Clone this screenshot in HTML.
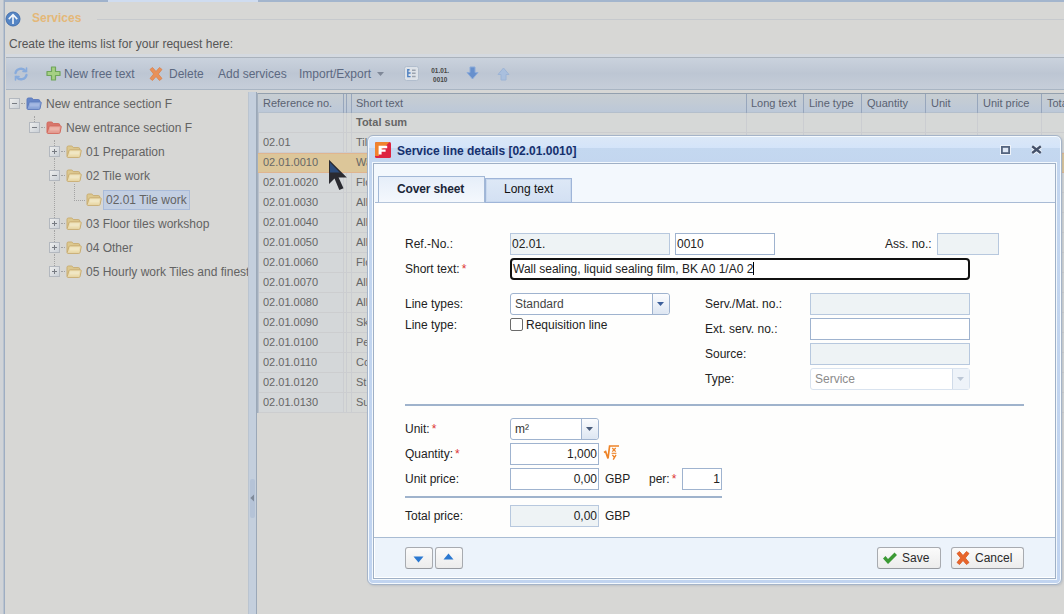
<!DOCTYPE html>
<html><head><meta charset="utf-8">
<style>
*{box-sizing:border-box;margin:0;padding:0}
html,body{width:1064px;height:614px;overflow:hidden;background:#d7d7d5;font-family:"Liberation Sans",sans-serif;font-size:12px;color:#4a4a4a}
.a{position:absolute}
.t{position:absolute;white-space:nowrap;line-height:14px}
/* background app */
#topbar{left:0;top:0;width:1064px;height:2px;background:linear-gradient(90deg,#9fb2cc 0,#9fb2cc 108px,#cfdcf0 108px,#cfdcf0 258px,#a3b5cd 258px)}
#leftedge{left:0;top:0;width:5px;height:614px;background:#d0d3d7;border-right:1px solid #9eadc2;box-shadow:-1px 0 0 #b9c3cf inset}
#toolbar{left:6px;top:57px;width:1058px;height:33px;background:linear-gradient(#cad2dd,#bdc6d3 50%,#c6ced9);border-top:1px solid #aab2bc;border-bottom:1px solid #a9b5c3;box-shadow:0 -3px 0 #d4d9e0}
#tree{left:6px;top:92px;width:242px;height:522px;background:#d7d7d5;overflow:hidden}
#split{left:248px;top:92px;width:9px;height:522px;background:#c4cfdd;border-left:1px solid #bac4d0;border-right:1px solid #9ba8b8}
#gridhdr{left:258px;top:93px;width:806px;height:20px;background:linear-gradient(#c8ced2,#bcc8d8);border-top:1px solid #93a0ae;border-bottom:1px solid #b4bfcc}
.row{position:absolute;left:258px;width:110px;height:20px;border-bottom:1px solid #cbcbcb;background:#d6d8d9}
.gt{color:#555}
/* dialog */
#dlg{left:367px;top:135px;width:695px;height:450px;background:linear-gradient(#dbe8f7 0,#d4e4f9 12px,#c4d8f0 12px,#c3d6ef 27px,#c1d4f0 100%);border:1px solid #a5b4c8;border-radius:6px;box-shadow:inset 0 0 0 1px #f5fafe,1px 1px 2px rgba(120,130,150,.25)}
#dlgbody{left:373px;top:163px;width:683px;height:416px;background:#fefefd;border:1px solid #9fb0c6;box-shadow:0 0 0 1px #f2f8fd}
#tabstrip{left:374px;top:164px;width:681px;height:38px;background:#f3f8fd}
#foot{left:374px;top:537px;width:681px;height:41px;background:#ecf3fb;border-top:1px solid #a9bcd3;box-shadow:inset 1px -1px 0 #fff}
.inp{position:absolute;height:22px;border:1px solid #9fb3cf;background:#fff;color:#222;font-size:12px;line-height:20px;padding-left:1px;white-space:nowrap;overflow:hidden}
.ro{background:#eef3f5;border-color:#b7c8de}
.lbl{position:absolute;white-space:nowrap;color:#222;line-height:14px;font-size:12px}
.req{color:#d33}
.btn{position:absolute;height:22px;border:1px solid #a8abb0;border-bottom-color:#979aa0;border-radius:3px;background:linear-gradient(#fbfbfb,#ececec);color:#2a2a2a;line-height:20px;font-size:12px}
</style></head><body>
<div class="a" id="topbar"></div>
<div class="a" id="leftedge"></div>
<!-- header -->
<svg class="a" style="left:5px;top:11px" width="16" height="16" viewBox="0 0 16 16"><circle cx="8" cy="8" r="7" fill="#5585c4" stroke="#436fae" stroke-width="1"/><path d="M8 2.6 L3.2 7.6 L4.3 8.7 L7.2 5.8 V13 H8.8 V5.8 L11.7 8.7 L12.8 7.6 Z" fill="#f4f7fb"/></svg>
<div class="t" style="left:32px;top:11px;font-weight:bold;color:#e4b878;font-size:12px">Services</div>
<div class="a" style="left:97px;top:19px;width:967px;height:1px;background:#c6c9cd"></div>
<div class="t" style="left:9px;top:37px;color:#555">Create the items list for your request here:</div>
<div class="a" id="toolbar"></div>
<div class="t" style="left:64px;top:67px;color:#5c6981">New free text</div>
<div class="t" style="left:169px;top:67px;color:#5c6981">Delete</div>
<div class="t" style="left:218px;top:67px;color:#5c6981">Add services</div>
<div class="t" style="left:299px;top:67px;color:#5c6981">Import/Export</div>

<!-- toolbar icons -->
<svg class="a" style="left:13px;top:66px" width="16" height="16" viewBox="0 0 16 16" fill="none" stroke="#88abdc" stroke-width="2.3" stroke-linecap="round"><path d="M2.5 7 A5.5 5 0 0 1 12.5 5"/><path d="M13.5 9 A5.5 5 0 0 1 3.5 11"/><path d="M13.5 2 V5.5 H10" stroke-width="1.6"/><path d="M2.5 14 V10.5 H6" stroke-width="1.6"/></svg>
<svg class="a" style="left:46px;top:66px" width="15" height="15" viewBox="0 0 15 15"><path d="M5.5 1 H9.5 V5.5 H14 V9.5 H9.5 V14 H5.5 V9.5 H1 V5.5 H5.5 Z" fill="#a5d083" stroke="#6fa55a" stroke-width="1.2" stroke-linejoin="round"/></svg>
<svg class="a" style="left:148px;top:66px" width="16" height="16" viewBox="0 0 16 16"><path d="M2 3.5 L4.5 1.5 L8 5.5 L11.5 1.5 L14 3.5 L10.3 8 L14 12.5 L11.5 14.5 L8 10.5 L4.5 14.5 L2 12.5 L5.7 8 Z" fill="#e8915a" stroke="#d9824c" stroke-width=".8" stroke-linejoin="round"/></svg>
<svg class="a" style="left:376px;top:71px" width="9" height="6" viewBox="0 0 9 6"><path d="M1 1 H8 L4.5 5 Z" fill="#7f8898"/></svg>
<svg class="a" style="left:404px;top:66px" width="15" height="15" viewBox="0 0 15 15"><rect x=".5" y=".5" width="14" height="14" rx="2" fill="#dde2e8" stroke="#b1bdcd"/><path d="M3.2 3.8 H5.6 M3.8 3 V10.6 H6.6 M3.8 7 H6.6" stroke="#4f80c0" stroke-width="1.4" fill="none"/><path d="M8 4.2 H11.6 M8 7.2 H11.6 M8 10.4 H11.6" stroke="#9aa2ad" stroke-width="1.5" fill="none"/></svg>
<div class="t" style="left:431px;top:67px;font-size:8px;line-height:8.5px;font-weight:bold;color:#454545;text-align:center;width:23px;transform:scaleX(.8);transform-origin:0 0">01.01.<br>0010</div>
<svg class="a" style="left:466px;top:66px" width="13" height="14" viewBox="0 0 13 14"><path d="M4 1 H9 V6.5 H12 L6.5 13 L1 6.5 H4 Z" fill="#6790cd" stroke="#8cabd9" stroke-width="1" stroke-linejoin="round"/></svg>
<svg class="a" style="left:497px;top:67px" width="13" height="14" viewBox="0 0 13 14"><path d="M4 13 H9 V7.5 H12 L6.5 1 L1 7.5 H4 Z" fill="#a9bfde" stroke="#9cb4d6" stroke-width="1" stroke-linejoin="round"/></svg>
<div class="a" id="tree"></div>
<!-- tree -->
<div class="a" style="left:34px;top:116px;width:0;height:6px;border-left:1px dotted #a3a3a3"></div>
<div class="a" style="left:54px;top:140px;width:0;height:6px;border-left:1px dotted #a3a3a3"></div>
<div class="a" style="left:54px;top:158px;width:0;height:12px;border-left:1px dotted #a3a3a3"></div>
<div class="a" style="left:54px;top:182px;width:0;height:36px;border-left:1px dotted #a3a3a3"></div>
<div class="a" style="left:54px;top:230px;width:0;height:12px;border-left:1px dotted #a3a3a3"></div>
<div class="a" style="left:54px;top:254px;width:0;height:12px;border-left:1px dotted #a3a3a3"></div>
<div class="a" style="left:74px;top:184px;width:0;height:17px;border-left:1px dotted #a3a3a3"></div>
<div class="a" style="left:74px;top:200px;width:11px;height:0;border-top:1px dotted #a3a3a3"></div>
<div class="a" style="left:103px;top:190px;width:87px;height:20px;background:#c3cfe2;border:1px solid #a9bbd9"></div>
<svg class="a" style="left:9px;top:98px" width="11" height="11" viewBox="0 0 11 11"><defs><linearGradient id="bg998" x1="0" y1="0" x2="1" y2="1"><stop offset="0" stop-color="#efefee"/><stop offset="1" stop-color="#c9cfd6"/></linearGradient></defs><rect x=".5" y=".5" width="10" height="10" fill="url(#bg998)" stroke="#b3b8bf"/><path d="M3 5.5 H8" stroke="#777b82" stroke-width="1"/></svg>
<div class="a" style="left:21px;top:103px;width:4px;height:0;border-top:1px dotted #a3a3a3"></div>
<svg class="a" style="left:26px;top:97px" width="16" height="13" viewBox="0 0 16 13"><path d="M1 11.5 V2.4 Q1 1 2.4 1 H5.4 Q6.3 1 6.8 1.8 L7.3 2.6 H12.4 Q13.7 2.6 13.7 3.9 V6" fill="#6786c7" stroke="#5f7cbd" stroke-width="1"/><path d="M1.2 11.6 Q1 12.4 2 12.4 H12.8 Q13.9 12.4 14.1 11.4 L15.2 5.9 Q15.4 4.8 14.3 4.8 H4.2 Q3.1 4.8 2.9 5.8 Z" fill="#8fa8da" stroke="#5f7cbd" stroke-width="1" stroke-linejoin="round"/><path d="M4.2 6.3 H13.6 L12.9 9.5 H3.5 Z" fill="#a9bce3" opacity=".8"/></svg>
<div class="t" style="left:46px;top:97px;color:#636363">New entrance section F</div>
<svg class="a" style="left:29px;top:122px" width="11" height="11" viewBox="0 0 11 11"><defs><linearGradient id="bg29122" x1="0" y1="0" x2="1" y2="1"><stop offset="0" stop-color="#efefee"/><stop offset="1" stop-color="#c9cfd6"/></linearGradient></defs><rect x=".5" y=".5" width="10" height="10" fill="url(#bg29122)" stroke="#b3b8bf"/><path d="M3 5.5 H8" stroke="#777b82" stroke-width="1"/></svg>
<div class="a" style="left:41px;top:127px;width:4px;height:0;border-top:1px dotted #a3a3a3"></div>
<svg class="a" style="left:46px;top:121px" width="16" height="13" viewBox="0 0 16 13"><path d="M1 11.5 V2.4 Q1 1 2.4 1 H5.4 Q6.3 1 6.8 1.8 L7.3 2.6 H12.4 Q13.7 2.6 13.7 3.9 V6" fill="#d8786d" stroke="#d36a5e" stroke-width="1"/><path d="M1.2 11.6 Q1 12.4 2 12.4 H12.8 Q13.9 12.4 14.1 11.4 L15.2 5.9 Q15.4 4.8 14.3 4.8 H4.2 Q3.1 4.8 2.9 5.8 Z" fill="#e5a196" stroke="#d36a5e" stroke-width="1" stroke-linejoin="round"/><path d="M4.2 6.3 H13.6 L12.9 9.5 H3.5 Z" fill="#edb9ae" opacity=".8"/></svg>
<div class="t" style="left:66px;top:121px;color:#636363">New entrance section F</div>
<svg class="a" style="left:49px;top:146px" width="11" height="11" viewBox="0 0 11 11"><defs><linearGradient id="bg49146" x1="0" y1="0" x2="1" y2="1"><stop offset="0" stop-color="#efefee"/><stop offset="1" stop-color="#c9cfd6"/></linearGradient></defs><rect x=".5" y=".5" width="10" height="10" fill="url(#bg49146)" stroke="#b3b8bf"/><path d="M3 5.5 H8" stroke="#777b82" stroke-width="1"/><path d="M5.5 3 V8" stroke="#777b82" stroke-width="1"/></svg>
<div class="a" style="left:61px;top:151px;width:4px;height:0;border-top:1px dotted #a3a3a3"></div>
<svg class="a" style="left:66px;top:145px" width="16" height="13" viewBox="0 0 16 13"><path d="M1 11.5 V2.4 Q1 1 2.4 1 H5.4 Q6.3 1 6.8 1.8 L7.3 2.6 H12.4 Q13.7 2.6 13.7 3.9 V6" fill="#dcc88f" stroke="#c9ad72" stroke-width="1"/><path d="M1.2 11.6 Q1 12.4 2 12.4 H12.8 Q13.9 12.4 14.1 11.4 L15.2 5.9 Q15.4 4.8 14.3 4.8 H4.2 Q3.1 4.8 2.9 5.8 Z" fill="#ebdcae" stroke="#c9ad72" stroke-width="1" stroke-linejoin="round"/><path d="M4.2 6.3 H13.6 L12.9 9.5 H3.5 Z" fill="#f1e8c8" opacity=".8"/></svg>
<div class="t" style="left:86px;top:145px;color:#636363">01 Preparation</div>
<svg class="a" style="left:49px;top:170px" width="11" height="11" viewBox="0 0 11 11"><defs><linearGradient id="bg49170" x1="0" y1="0" x2="1" y2="1"><stop offset="0" stop-color="#efefee"/><stop offset="1" stop-color="#c9cfd6"/></linearGradient></defs><rect x=".5" y=".5" width="10" height="10" fill="url(#bg49170)" stroke="#b3b8bf"/><path d="M3 5.5 H8" stroke="#777b82" stroke-width="1"/></svg>
<div class="a" style="left:61px;top:175px;width:4px;height:0;border-top:1px dotted #a3a3a3"></div>
<svg class="a" style="left:66px;top:169px" width="16" height="13" viewBox="0 0 16 13"><path d="M1 11.5 V2.4 Q1 1 2.4 1 H5.4 Q6.3 1 6.8 1.8 L7.3 2.6 H12.4 Q13.7 2.6 13.7 3.9 V6" fill="#dcc88f" stroke="#c9ad72" stroke-width="1"/><path d="M1.2 11.6 Q1 12.4 2 12.4 H12.8 Q13.9 12.4 14.1 11.4 L15.2 5.9 Q15.4 4.8 14.3 4.8 H4.2 Q3.1 4.8 2.9 5.8 Z" fill="#ebdcae" stroke="#c9ad72" stroke-width="1" stroke-linejoin="round"/><path d="M4.2 6.3 H13.6 L12.9 9.5 H3.5 Z" fill="#f1e8c8" opacity=".8"/></svg>
<div class="t" style="left:86px;top:169px;color:#636363">02 Tile work</div>
<svg class="a" style="left:86px;top:193px" width="16" height="13" viewBox="0 0 16 13"><path d="M1 11.5 V2.4 Q1 1 2.4 1 H5.4 Q6.3 1 6.8 1.8 L7.3 2.6 H12.4 Q13.7 2.6 13.7 3.9 V6" fill="#dcc88f" stroke="#c9ad72" stroke-width="1"/><path d="M1.2 11.6 Q1 12.4 2 12.4 H12.8 Q13.9 12.4 14.1 11.4 L15.2 5.9 Q15.4 4.8 14.3 4.8 H4.2 Q3.1 4.8 2.9 5.8 Z" fill="#ebdcae" stroke="#c9ad72" stroke-width="1" stroke-linejoin="round"/><path d="M4.2 6.3 H13.6 L12.9 9.5 H3.5 Z" fill="#f1e8c8" opacity=".8"/></svg>
<div class="t" style="left:106px;top:193px;color:#636363">02.01 Tile work</div>
<svg class="a" style="left:49px;top:218px" width="11" height="11" viewBox="0 0 11 11"><defs><linearGradient id="bg49218" x1="0" y1="0" x2="1" y2="1"><stop offset="0" stop-color="#efefee"/><stop offset="1" stop-color="#c9cfd6"/></linearGradient></defs><rect x=".5" y=".5" width="10" height="10" fill="url(#bg49218)" stroke="#b3b8bf"/><path d="M3 5.5 H8" stroke="#777b82" stroke-width="1"/><path d="M5.5 3 V8" stroke="#777b82" stroke-width="1"/></svg>
<div class="a" style="left:61px;top:223px;width:4px;height:0;border-top:1px dotted #a3a3a3"></div>
<svg class="a" style="left:66px;top:217px" width="16" height="13" viewBox="0 0 16 13"><path d="M1 11.5 V2.4 Q1 1 2.4 1 H5.4 Q6.3 1 6.8 1.8 L7.3 2.6 H12.4 Q13.7 2.6 13.7 3.9 V6" fill="#dcc88f" stroke="#c9ad72" stroke-width="1"/><path d="M1.2 11.6 Q1 12.4 2 12.4 H12.8 Q13.9 12.4 14.1 11.4 L15.2 5.9 Q15.4 4.8 14.3 4.8 H4.2 Q3.1 4.8 2.9 5.8 Z" fill="#ebdcae" stroke="#c9ad72" stroke-width="1" stroke-linejoin="round"/><path d="M4.2 6.3 H13.6 L12.9 9.5 H3.5 Z" fill="#f1e8c8" opacity=".8"/></svg>
<div class="t" style="left:86px;top:217px;color:#636363">03 Floor tiles workshop</div>
<svg class="a" style="left:49px;top:242px" width="11" height="11" viewBox="0 0 11 11"><defs><linearGradient id="bg49242" x1="0" y1="0" x2="1" y2="1"><stop offset="0" stop-color="#efefee"/><stop offset="1" stop-color="#c9cfd6"/></linearGradient></defs><rect x=".5" y=".5" width="10" height="10" fill="url(#bg49242)" stroke="#b3b8bf"/><path d="M3 5.5 H8" stroke="#777b82" stroke-width="1"/><path d="M5.5 3 V8" stroke="#777b82" stroke-width="1"/></svg>
<div class="a" style="left:61px;top:247px;width:4px;height:0;border-top:1px dotted #a3a3a3"></div>
<svg class="a" style="left:66px;top:241px" width="16" height="13" viewBox="0 0 16 13"><path d="M1 11.5 V2.4 Q1 1 2.4 1 H5.4 Q6.3 1 6.8 1.8 L7.3 2.6 H12.4 Q13.7 2.6 13.7 3.9 V6" fill="#dcc88f" stroke="#c9ad72" stroke-width="1"/><path d="M1.2 11.6 Q1 12.4 2 12.4 H12.8 Q13.9 12.4 14.1 11.4 L15.2 5.9 Q15.4 4.8 14.3 4.8 H4.2 Q3.1 4.8 2.9 5.8 Z" fill="#ebdcae" stroke="#c9ad72" stroke-width="1" stroke-linejoin="round"/><path d="M4.2 6.3 H13.6 L12.9 9.5 H3.5 Z" fill="#f1e8c8" opacity=".8"/></svg>
<div class="t" style="left:86px;top:241px;color:#636363">04 Other</div>
<svg class="a" style="left:49px;top:266px" width="11" height="11" viewBox="0 0 11 11"><defs><linearGradient id="bg49266" x1="0" y1="0" x2="1" y2="1"><stop offset="0" stop-color="#efefee"/><stop offset="1" stop-color="#c9cfd6"/></linearGradient></defs><rect x=".5" y=".5" width="10" height="10" fill="url(#bg49266)" stroke="#b3b8bf"/><path d="M3 5.5 H8" stroke="#777b82" stroke-width="1"/><path d="M5.5 3 V8" stroke="#777b82" stroke-width="1"/></svg>
<div class="a" style="left:61px;top:271px;width:4px;height:0;border-top:1px dotted #a3a3a3"></div>
<svg class="a" style="left:66px;top:265px" width="16" height="13" viewBox="0 0 16 13"><path d="M1 11.5 V2.4 Q1 1 2.4 1 H5.4 Q6.3 1 6.8 1.8 L7.3 2.6 H12.4 Q13.7 2.6 13.7 3.9 V6" fill="#dcc88f" stroke="#c9ad72" stroke-width="1"/><path d="M1.2 11.6 Q1 12.4 2 12.4 H12.8 Q13.9 12.4 14.1 11.4 L15.2 5.9 Q15.4 4.8 14.3 4.8 H4.2 Q3.1 4.8 2.9 5.8 Z" fill="#ebdcae" stroke="#c9ad72" stroke-width="1" stroke-linejoin="round"/><path d="M4.2 6.3 H13.6 L12.9 9.5 H3.5 Z" fill="#f1e8c8" opacity=".8"/></svg>
<div class="t" style="left:86px;top:265px;color:#636363;width:162px;overflow:hidden">05 Hourly work Tiles and finest</div>
<!-- /tree -->
<div class="a" id="split"></div>
<div class="a" style="left:250px;top:479px;width:5px;height:39px;background:#b5c3d7;border-radius:2px"></div>
<svg class="a" style="left:250px;top:494px" width="5" height="8" viewBox="0 0 5 8"><path d="M4 .5 V7.5 L.3 4 Z" fill="#7f8a99"/></svg>
<div class="a" id="gridhdr"></div>
<!-- grid -->
<div class="t" style="font-size:11px;left:263px;top:96px;color:#5a6272">Reference no.</div>
<div class="t" style="font-size:11px;left:356px;top:96px;color:#5a6272">Short text</div>
<div class="t" style="font-size:11px;left:751px;top:96px;color:#5a6272">Long text</div>
<div class="t" style="font-size:11px;left:809px;top:96px;color:#5a6272">Line type</div>
<div class="t" style="font-size:11px;left:867px;top:96px;color:#5a6272">Quantity</div>
<div class="t" style="font-size:11px;left:931px;top:96px;color:#5a6272">Unit</div>
<div class="t" style="font-size:11px;left:983px;top:96px;color:#5a6272">Unit price</div>
<div class="t" style="font-size:11px;left:1047px;top:96px;color:#5a6272">Total</div>
<div class="a" style="left:257px;top:93px;width:1px;height:320px;background:#a3afbd"></div>
<div class="a" style="left:343px;top:94px;width:1px;height:19px;background:#97a6bc"></div>
<div class="a" style="left:346px;top:94px;width:1px;height:19px;background:#97a6bc"></div>
<div class="a" style="left:351px;top:94px;width:1px;height:19px;background:#97a6bc"></div>
<div class="a" style="left:746px;top:94px;width:1px;height:19px;background:#97a6bc"></div>
<div class="a" style="left:803px;top:94px;width:1px;height:19px;background:#97a6bc"></div>
<div class="a" style="left:861px;top:94px;width:1px;height:19px;background:#97a6bc"></div>
<div class="a" style="left:925px;top:94px;width:1px;height:19px;background:#97a6bc"></div>
<div class="a" style="left:977px;top:94px;width:1px;height:19px;background:#97a6bc"></div>
<div class="a" style="left:1041px;top:94px;width:1px;height:19px;background:#97a6bc"></div>
<div class="a" style="left:258px;top:113px;width:806px;height:300px;background:#d6d8d7"></div>
<div class="a" style="left:258px;top:113px;width:85px;height:300px;background:#d4d7d9"></div>
<div class="a" style="left:258px;top:132px;width:806px;height:1px;background:#cccdcf"></div>
<div class="t" style="font-size:11px;left:263px;top:115px;color:#666"></div>
<div class="t" style="font-size:11px;left:356px;top:115px;color:#666;font-weight:bold;">Total sum</div>
<div class="a" style="left:258px;top:152px;width:806px;height:1px;background:#cccdcf"></div>
<div class="t" style="font-size:11px;left:263px;top:135px;color:#666">02.01</div>
<div class="t" style="font-size:11px;left:356px;top:135px;color:#666;">Til</div>
<div class="a" style="left:258px;top:192px;width:806px;height:1px;background:#cccdcf"></div>
<div class="t" style="font-size:11px;left:263px;top:175px;color:#666">02.01.0020</div>
<div class="t" style="font-size:11px;left:356px;top:175px;color:#666;">Flo</div>
<div class="a" style="left:258px;top:212px;width:806px;height:1px;background:#cccdcf"></div>
<div class="t" style="font-size:11px;left:263px;top:195px;color:#666">02.01.0030</div>
<div class="t" style="font-size:11px;left:356px;top:195px;color:#666;">All</div>
<div class="a" style="left:258px;top:232px;width:806px;height:1px;background:#cccdcf"></div>
<div class="t" style="font-size:11px;left:263px;top:215px;color:#666">02.01.0040</div>
<div class="t" style="font-size:11px;left:356px;top:215px;color:#666;">All</div>
<div class="a" style="left:258px;top:252px;width:806px;height:1px;background:#cccdcf"></div>
<div class="t" style="font-size:11px;left:263px;top:235px;color:#666">02.01.0050</div>
<div class="t" style="font-size:11px;left:356px;top:235px;color:#666;">All</div>
<div class="a" style="left:258px;top:272px;width:806px;height:1px;background:#cccdcf"></div>
<div class="t" style="font-size:11px;left:263px;top:255px;color:#666">02.01.0060</div>
<div class="t" style="font-size:11px;left:356px;top:255px;color:#666;">Flo</div>
<div class="a" style="left:258px;top:292px;width:806px;height:1px;background:#cccdcf"></div>
<div class="t" style="font-size:11px;left:263px;top:275px;color:#666">02.01.0070</div>
<div class="t" style="font-size:11px;left:356px;top:275px;color:#666;">All</div>
<div class="a" style="left:258px;top:312px;width:806px;height:1px;background:#cccdcf"></div>
<div class="t" style="font-size:11px;left:263px;top:295px;color:#666">02.01.0080</div>
<div class="t" style="font-size:11px;left:356px;top:295px;color:#666;">All</div>
<div class="a" style="left:258px;top:332px;width:806px;height:1px;background:#cccdcf"></div>
<div class="t" style="font-size:11px;left:263px;top:315px;color:#666">02.01.0090</div>
<div class="t" style="font-size:11px;left:356px;top:315px;color:#666;">Sk</div>
<div class="a" style="left:258px;top:352px;width:806px;height:1px;background:#cccdcf"></div>
<div class="t" style="font-size:11px;left:263px;top:335px;color:#666">02.01.0100</div>
<div class="t" style="font-size:11px;left:356px;top:335px;color:#666;">Pe</div>
<div class="a" style="left:258px;top:372px;width:806px;height:1px;background:#cccdcf"></div>
<div class="t" style="font-size:11px;left:263px;top:355px;color:#666">02.01.0110</div>
<div class="t" style="font-size:11px;left:356px;top:355px;color:#666;">Co</div>
<div class="a" style="left:258px;top:392px;width:806px;height:1px;background:#cccdcf"></div>
<div class="t" style="font-size:11px;left:263px;top:375px;color:#666">02.01.0120</div>
<div class="t" style="font-size:11px;left:356px;top:375px;color:#666;">St</div>
<div class="a" style="left:258px;top:412px;width:806px;height:1px;background:#cccdcf"></div>
<div class="t" style="font-size:11px;left:263px;top:395px;color:#666">02.01.0130</div>
<div class="t" style="font-size:11px;left:356px;top:395px;color:#666;">Su</div>
<div class="a" style="left:343px;top:113px;width:1px;height:300px;background:#cbcdd1"></div>
<div class="a" style="left:346px;top:113px;width:1px;height:300px;background:#cbcdd1"></div>
<div class="a" style="left:351px;top:113px;width:1px;height:300px;background:#cbcdd1"></div>
<div class="a" style="left:746px;top:113px;width:1px;height:300px;background:#cbcdd1"></div>
<div class="a" style="left:803px;top:113px;width:1px;height:300px;background:#cbcdd1"></div>
<div class="a" style="left:861px;top:113px;width:1px;height:300px;background:#cbcdd1"></div>
<div class="a" style="left:925px;top:113px;width:1px;height:300px;background:#cbcdd1"></div>
<div class="a" style="left:977px;top:113px;width:1px;height:300px;background:#cbcdd1"></div>
<div class="a" style="left:1041px;top:113px;width:1px;height:300px;background:#cbcdd1"></div>
<div class="a" style="left:258px;top:113px;width:1px;height:300px;background:#b9c1cd"></div>
<div class="a" style="left:258px;top:153px;width:806px;height:20px;background:#dcc699;border-top:1px solid #e0b58f;border-bottom:1px solid #e0b58f"></div>
<div class="t" style="font-size:11px;left:263px;top:155px;color:#666">02.01.0010</div>
<div class="t" style="font-size:11px;left:356px;top:155px;color:#666;">Wa</div>
<svg class="a" style="left:327px;top:158px" width="22" height="34" viewBox="0 0 22 34"><defs><clipPath id="cc"><rect x="0" y="0" width="22" height="14.5"/></clipPath></defs><path d="M2 1.8 V26 L7.5 20.5 L12.3 32 L16.5 30.2 L11.6 19.4 H19.8 Z" fill="#2a2a30"/><path d="M3 4.5 V24 L7.8 19 L9 19.4 H17.5 Z" fill="#2c4c7c" clip-path="url(#cc)"/></svg>
<!-- /grid -->
<!-- dialog -->
<div class="a" id="dlg"></div>
<div class="a" id="dlgbody"></div>
<div class="a" id="tabstrip"></div>
<div class="a" id="foot"></div>
<div class="t" style="left:397px;top:144px;font-weight:bold;color:#15306e;font-size:12px">Service line details [02.01.0010]</div>

<!-- dlg content -->
<svg class="a" style="left:375px;top:142px" width="16" height="16" viewBox="0 0 16 16"><rect x="0" y="0" width="16" height="16" rx="1.5" fill="#de2440"/><path d="M0 14 V1.5 Q0 0 1.5 0 H14.5 L4 10.5 V14 Z" fill="#f0832e"/><path d="M3.6 12.6 V3.8 H12.2 V6.2 H6.6 V7.6 H10.6 V9.8 H6.6 V12.6 Z" fill="#fff"/></svg>
<svg class="a" style="left:999px;top:144px" width="13" height="12" viewBox="0 0 13 12"><rect x="1" y="1" width="11" height="10" fill="#eef3fa"/><rect x="2.9" y="2.9" width="7.2" height="6.2" fill="#dfe8f5" stroke="#55657f" stroke-width="1.8"/></svg>
<svg class="a" style="left:1030px;top:144px" width="13" height="11" viewBox="0 0 13 11"><path d="M2.2 2.3 L10.8 9 M10.8 2.3 L2.2 9" stroke="#f1f6fc" stroke-width="4.2"/><path d="M2.2 2.3 L10.8 9 M10.8 2.3 L2.2 9" stroke="#45526b" stroke-width="2.4"/></svg>
<!-- tabs -->
<div class="a" style="left:375px;top:202px;width:680px;height:1px;background:#a9bbd5"></div>
<div class="a" style="left:378px;top:176px;width:107px;height:27px;background:linear-gradient(#e6eef9,#f4f8fd);border:1px solid #a2b8d6;border-bottom-color:#b5c5da"></div>
<div class="a" style="left:485px;top:178px;width:87px;height:25px;background:linear-gradient(#dde8f6,#d3e0f3);border:1px solid #9fb5d8;box-shadow:inset 0 0 0 1px #c9d9ee"></div>
<div class="lbl" style="left:397px;top:182px;color:#1b2638;font-weight:bold;letter-spacing:-.15px">Cover sheet</div>
<div class="lbl" style="left:504px;top:182px;color:#111">Long text</div>
<!-- fields -->
<div class="lbl" style="left:405px;top:237px">Ref.-No.:</div>
<div class="inp ro" style="left:510px;top:233px;width:160px">02.01.</div>
<div class="inp" style="left:675px;top:233px;width:100px">0010</div>
<div class="lbl" style="left:885px;top:237px">Ass. no.:</div>
<div class="inp ro" style="left:937px;top:233px;width:62px"></div>
<div class="lbl" style="left:405px;top:262px">Short text:<span class="req" style="margin-left:2px">*</span></div>
<div class="inp" style="left:510px;top:258px;width:460px;border:2px solid #111;border-radius:4px;line-height:18px;padding-left:1px">Wall sealing, liquid sealing film, BK A0 1/A0 2<span style="display:inline-block;width:1px;height:13px;background:#000;vertical-align:-2px"></span></div>
<div class="lbl" style="left:405px;top:297px">Line types:</div>
<div class="inp" style="left:510px;top:293px;width:160px;color:#444;padding-left:4px;border-radius:3px">Standard</div>
<div class="a" style="left:652px;top:294px;width:17px;height:20px;background:linear-gradient(#fbfcfe,#dde6f2);border-left:1px solid #9fb3cf;border-radius:0 3px 3px 0"></div>
<svg class="a" style="left:656px;top:301px" width="9" height="6" viewBox="0 0 9 6"><path d="M1 1 H8 L4.5 5 Z" fill="#3c5f9b"/></svg>
<div class="lbl" style="left:405px;top:318px">Line type:</div>
<div class="a" style="left:510px;top:318px;width:13px;height:13px;border:1px solid #6b6b6b;border-radius:2px;background:#fff"></div>
<div class="lbl" style="left:526px;top:318px">Requisition line</div>
<div class="lbl" style="left:705px;top:297px">Serv./Mat. no.:</div>
<div class="inp ro" style="left:810px;top:293px;width:160px"></div>
<div class="lbl" style="left:705px;top:322px">Ext. serv. no.:</div>
<div class="inp" style="left:810px;top:318px;width:160px"></div>
<div class="lbl" style="left:705px;top:347px">Source:</div>
<div class="inp ro" style="left:810px;top:343px;width:160px"></div>
<div class="lbl" style="left:705px;top:372px">Type:</div>
<div class="inp" style="left:810px;top:368px;width:160px;color:#8c8c8c;border-color:#d9e3ef;padding-left:4px;border-radius:3px">Service</div>
<div class="a" style="left:952px;top:369px;width:17px;height:20px;background:#eef3f9;border-left:1px solid #d0dbe9"></div>
<svg class="a" style="left:956px;top:376px" width="9" height="6" viewBox="0 0 9 6"><path d="M1 1 H8 L4.5 5 Z" fill="#bcc7d6"/></svg>
<div class="a" style="left:405px;top:404px;width:619px;height:2px;background:#9fb3cc"></div>
<div class="lbl" style="left:405px;top:422px">Unit:<span class="req" style="margin-left:2px">*</span></div>
<div class="inp" style="left:510px;top:418px;width:89px;color:#333;padding-left:4px;border-radius:3px">m²</div>
<div class="a" style="left:581px;top:419px;width:17px;height:20px;background:linear-gradient(#fbfcfe,#dde6f2);border-left:1px solid #9fb3cf;border-radius:0 3px 3px 0"></div>
<svg class="a" style="left:585px;top:426px" width="9" height="6" viewBox="0 0 9 6"><path d="M1 1 H8 L4.5 5 Z" fill="#4a5d7c"/></svg>
<div class="lbl" style="left:405px;top:447px">Quantity:<span class="req" style="margin-left:2px">*</span></div>
<div class="inp" style="left:510px;top:443px;width:89px;text-align:right;padding-right:1px">1,000</div>
<div class="lbl" style="left:405px;top:472px">Unit price:</div>
<div class="inp" style="left:510px;top:468px;width:89px;text-align:right;padding-right:1px">0,00</div>
<div class="lbl" style="left:605px;top:472px">GBP</div>
<div class="lbl" style="left:649px;top:472px">per:<span class="req" style="margin-left:2px">*</span></div>
<div class="inp" style="left:682px;top:468px;width:40px;text-align:right;padding-right:1px">1</div>
<div class="a" style="left:405px;top:496px;width:317px;height:2px;background:#9fb3cc"></div>
<div class="lbl" style="left:405px;top:509px">Total price:</div>
<div class="inp ro" style="left:510px;top:505px;width:89px;text-align:right;padding-right:1px">0,00</div>
<div class="lbl" style="left:605px;top:509px">GBP</div>
<!-- footer buttons -->
<div class="btn" style="left:405px;top:547px;width:28px"></div>
<svg class="a" style="left:413px;top:556px" width="11" height="7" viewBox="0 0 11 7"><path d="M.5 .5 H10.5 L5.5 6.5 Z" fill="#2b78d0"/></svg>
<div class="btn" style="left:435px;top:547px;width:28px"></div>
<svg class="a" style="left:443px;top:553px" width="11" height="7" viewBox="0 0 11 7"><path d="M.5 6.5 H10.5 L5.5 .5 Z" fill="#2b78d0"/></svg>
<div class="btn" style="left:877px;top:547px;width:64px;padding-left:24px">Save</div>
<svg class="a" style="left:882px;top:551px" width="16" height="14" viewBox="0 0 16 14"><path d="M1 7.5 L3.5 5 L6 8 L12.5 1.5 L15 4 L6 13 Z" fill="#3c9a34"/></svg>
<div class="btn" style="left:951px;top:547px;width:73px;padding-left:23px">Cancel</div>
<svg class="a" style="left:955px;top:550px" width="16" height="16" viewBox="0 0 16 16"><path d="M2 3.5 L4.5 1.5 L8 5.5 L11.5 1.5 L14 3.5 L10.3 8 L14 12.5 L11.5 14.5 L8 10.5 L4.5 14.5 L2 12.5 L5.7 8 Z" fill="#e8652a" stroke="#d9541c" stroke-width=".8" stroke-linejoin="round"/></svg>
<!-- sqrt icon -->
<svg class="a" style="left:603px;top:444px" width="17" height="17" viewBox="0 0 17 17" fill="none" stroke="#ee8428" stroke-width="1.5"><path d="M1 8.5 L2.6 7.6 L5 14.5 L6.6 2 H16" stroke-width="1.7"/><path d="M9.3 4 L12.7 7.6 M12.7 4 L9.3 7.6" stroke-width="1.3"/><path d="M8.6 9.3 H13.4" stroke-width="1.1"/><path d="M9.4 10.8 L11.2 13.2 M13 10.8 L10.2 15.6" stroke-width="1.4"/></svg>
</body></html>
